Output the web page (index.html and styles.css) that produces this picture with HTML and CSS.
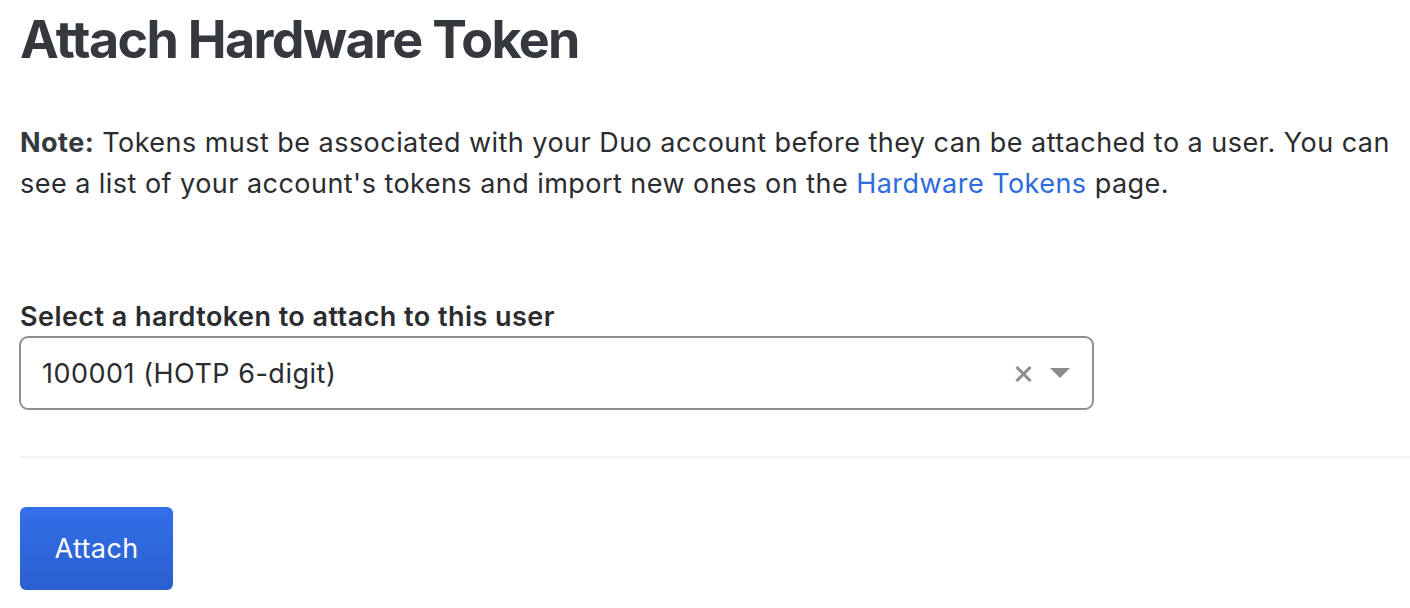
FILE: index.html
```html
<!DOCTYPE html>
<html>
<head>
<meta charset="utf-8">
<link rel="stylesheet" href="styles.css">
</head>
<body>
<main class="page">
  <h1 class="title">Attach Hardware Token</h1>
  <p class="note"><strong>Note:</strong> Tokens must be associated with your Duo account before they can be attached to a user. You can see a list of your account's tokens and import new ones on the <a class="link" href="#">Hardware Tokens</a> page.</p>
  <div class="field">
    <label class="label">Select a hardtoken to attach to this user</label>
    <div class="select">
      <span class="select-value">100001 (HOTP 6-digit)</span>
      <span class="select-icons">
        <svg class="clear" width="17" height="16" viewBox="0 0 17 16"><path d="M1.5 1 L15.5 15 M15.5 1 L1.5 15" stroke="#8c8c8c" stroke-width="3" stroke-linecap="butt"/></svg>
        <svg class="caret" width="20" height="10" viewBox="0 0 20 10"><path d="M0 0 L20 0 L10 10 Z" fill="#8c8c8c"/></svg>
      </span>
    </div>
  </div>
  <hr class="divider">
  <button class="btn">Attach</button>
</main>
</body>
</html>
```
FILE: styles.css
```css
html, body { margin: 0; padding: 0; background: #fff; }
body { font-family: Inter, "Noto Sans", sans-serif; color: #2b2c30; }
.page { padding: 0 0 0 20px; }
.title {
  margin: 0;
  padding-top: 12px;
  font-family: Inter, sans-serif;
  font-weight: 700;
  font-size: 52px;
  line-height: 56px;
  color: #35383d;
  letter-spacing: -1.65px;
}
.note {
  margin: 54px 0 0 0;
  font-size: 27px;
  line-height: 41px;
  letter-spacing: 0.46px;
  padding-right: 0;
}
.note strong { font-weight: 700; color: #35383d; }
.link { color: #2e6ae0; text-decoration: none; }
.field { margin-top: 96px; }
.label {
  display: block;
  font-size: 27px;
  font-weight: 600;
  line-height: 34px;
  letter-spacing: 0.45px;
  color: #2b2c30;
}
.select {
  margin-top: 2px;
  box-sizing: border-box;
  width: 1075px;
  margin-left: -1px;
  height: 74px;
  border: 2px solid #8f8f8f;
  border-radius: 9px;
  display: flex;
  align-items: center;
  justify-content: space-between;
  padding: 0 22px 0 21px;
}
.select-value { font-size: 27px; letter-spacing: 0.5px; color: #2b2c30; }
.select-icons { display: flex; align-items: center; gap: 18px; }
.clear { margin-top: 2px; }
.divider {
  margin: 46px 0 0 0;
  border: 0;
  border-top: 2px solid #f2f2f2;
}
.btn {
  display: block;
  margin-top: 49px;
  width: 153px;
  height: 83px;
  border: 0;
  border-radius: 6px;
  background: linear-gradient(#336fe9, #2a5fcf);
  color: #fff;
  font-family: Inter, sans-serif;
  font-size: 27px;
  letter-spacing: 0.4px;
  cursor: pointer;
}
```
